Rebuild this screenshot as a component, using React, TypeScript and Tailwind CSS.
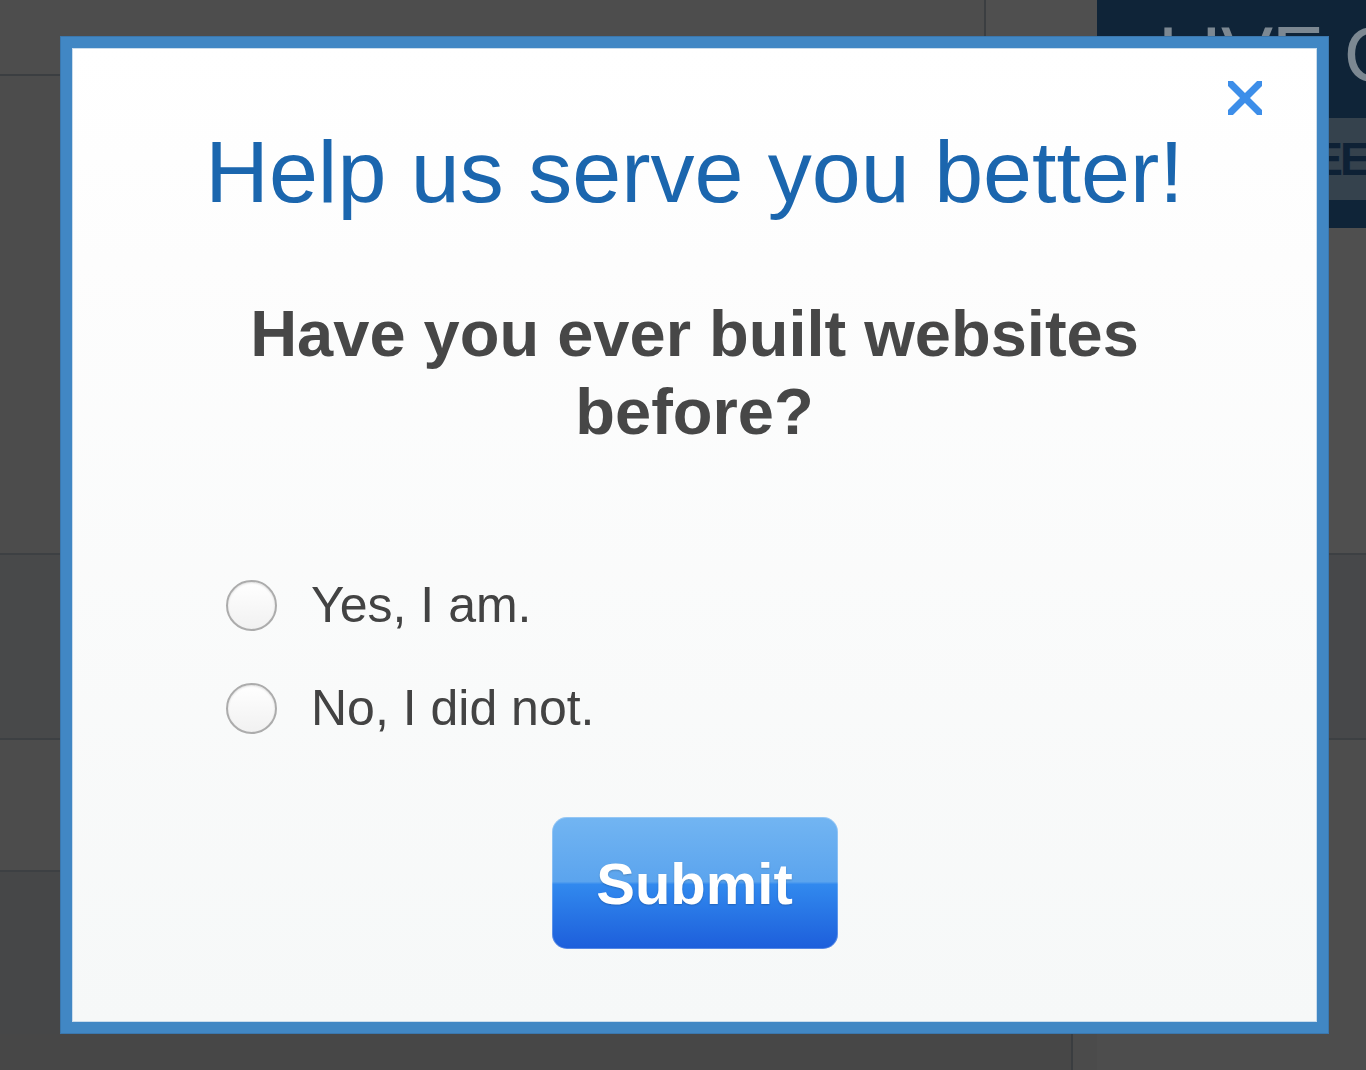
import React from "react";

const FONT = "font-['Liberation_Sans',Arial,Helvetica,sans-serif]";

function CloseIcon() {
  return (
    <svg viewBox="0 0 34 34" className="w-[34px] h-[34px]" aria-hidden>
      <line x1="-3" y1="-3" x2="37" y2="37" stroke="#3d8ee9" strokeWidth={7} />
      <line x1="37" y1="-3" x2="-3" y2="37" stroke="#3d8ee9" strokeWidth={7} />
    </svg>
  );
}

function RadioOption({ label }: { label: string }) {
  return (
    <label className="h-[52px] flex items-center gap-[34px] cursor-pointer">
      <span className="w-[51px] h-[51px] shrink-0 rounded-full border-2 border-[#acacac] bg-[linear-gradient(to_bottom,#ffffff,#f1f1f1)] shadow-[inset_0_1px_2px_rgba(0,0,0,0.12)]" />
      <span className="text-[50px] leading-[50px] text-[#434343]">{label}</span>
    </label>
  );
}

function Backdrop() {
  return (
    <div className="w-[1366px] h-[1070px] flex bg-[#4b4b4b]">
      <div className="w-[1097px] flex flex-col">
        <div className="h-[76px] flex border-b-2 border-[#3b3e41] bg-[#4d4d4d]">
          <div className="w-[986px] h-full border-r-2 border-[#3b3e41]" />
          <div className="flex-1 bg-[#4f4f4f]" />
        </div>
        <div className="h-[477px] bg-[#4c4c4c]" />
        <div className="h-[185px] border-t-2 border-[#3d4043] bg-[#48494a]" />
        <div className="h-[132px] border-t-2 border-[#3d4043] bg-[#4c4c4c]" />
        <div className="h-[164px] border-t-2 border-[#3d4043] bg-[#464748]" />
        <div className="flex-1 flex">
          <div className="w-[1073px] h-full border-r-2 border-[#3a3d40] bg-[#474747]" />
          <div className="flex-1 bg-[#4b4b4b]" />
        </div>
      </div>
      <div className="flex-1 flex flex-col overflow-hidden">
        <div className="h-[228px] flex flex-col bg-[#0f2438]">
          <div className="h-[118px] pl-[61px] pt-[15px] overflow-hidden">
            <span className="block whitespace-nowrap text-[78px] leading-[78px] tracking-[-1px] text-[#7c8892]">
              LIVE CHAT
            </span>
          </div>
          <div className="h-[82px] bg-[#35424d] flex items-center pl-[160px] overflow-hidden">
            <span className="whitespace-nowrap text-[46px] font-bold tracking-[-3px] text-[#0e2135]">
              FREE
            </span>
          </div>
          <div className="flex-1" />
        </div>
        <div className="h-[325px] bg-[#4f4f4f]" />
        <div className="h-[185px] border-t-2 border-[#3d4043] bg-[#47484a]" />
        <div className="flex-1 border-t-2 border-[#3d4043] bg-[#4d4d4d]" />
      </div>
    </div>
  );
}

export default function App() {
  return (
    <div className={`relative w-[1366px] h-[1070px] overflow-hidden ${FONT}`}>
      <Backdrop />
      <div
        role="dialog"
        aria-modal="true"
        className="absolute left-[61px] top-[37px] w-[1267px] h-[996px] border-[11px] border-[#4187c4] shadow-[0_0_0_1px_#3b77ad]"
      >
        <div className="relative w-full h-full flex flex-col items-center bg-[linear-gradient(to_bottom,#ffffff_0%,#fdfdfd_22%,#f6f8f8_100%)] shadow-[inset_0_0_0_1px_#cadcec]">
          <button
            type="button"
            aria-label="Close"
            className="absolute right-[55px] top-[33px] w-[34px] h-[34px] cursor-pointer"
          >
            <CloseIcon />
          </button>
          <h1 className="mt-[80px] text-[88px] leading-[88px] text-[#1b66ae] whitespace-nowrap">
            Help us serve you better!
          </h1>
          <h2 className="mt-[79px] w-[980px] text-center text-[65px] leading-[78px] font-bold text-[#474747]">
            Have you ever built websites before?
          </h2>
          <div className="self-stretch mt-[128px] pl-[154px] flex flex-col gap-[51px]">
            <RadioOption label="Yes, I am." />
            <RadioOption label="No, I did not." />
          </div>
          <button
            type="button"
            className="mt-[83px] w-[286px] h-[132px] rounded-[15px] flex items-center justify-center text-[58px] font-bold text-white cursor-pointer bg-[linear-gradient(to_bottom,#72b5f2_0%,#5ba4ee_49%,#3189ee_51%,#1d5edb_100%)] shadow-[inset_0_0_0_1px_rgba(255,255,255,0.25)] [text-shadow:0_1px_2px_rgba(0,0,0,0.2)]"
          >
            Submit
          </button>
        </div>
      </div>
    </div>
  );
}
